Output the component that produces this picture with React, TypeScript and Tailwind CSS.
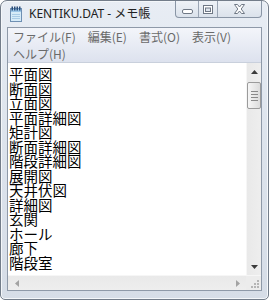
import React from 'react';

const lines = [
  '平面図',
  '断面図',
  '立面図',
  '平面詳細図',
  '矩計図',
  '断面詳細図',
  '階段詳細図',
  '展開図',
  '天井伏図',
  '詳細図',
  '玄関',
  'ホール',
  '廊下',
  '階段室',
];

const menuRow1 = ['ファイル(F)', '編集(E)', '書式(O)', '表示(V)'];

const NotepadIcon = () => (
  <svg width="12" height="16" viewBox="0 0 12 16">
    <rect x="0.5" y="2.5" width="11" height="13" fill="#d6ebf8" stroke="#6f90b3" />
    <rect x="1" y="3" width="10" height="3" fill="#9cc6e8" />
    <line x1="2" y1="8.5" x2="10" y2="8.5" stroke="#a9cbe6" />
    <line x1="2" y1="10.5" x2="10" y2="10.5" stroke="#a9cbe6" />
    <line x1="2" y1="12.5" x2="10" y2="12.5" stroke="#a9cbe6" />
    <rect x="1.5" y="0.5" width="1.5" height="4" fill="#2a4f7c" />
    <rect x="4" y="0.5" width="1.5" height="4" fill="#2a4f7c" />
    <rect x="6.5" y="0.5" width="1.5" height="4" fill="#2a4f7c" />
    <rect x="9" y="0.5" width="1.5" height="4" fill="#2a4f7c" />
  </svg>
);

const CaptionButtons = () => (
  <div className="ml-auto flex h-[17px] w-[87px] self-start overflow-hidden rounded-b-[4px] border border-t-0 border-[#8995a5] bg-gradient-to-b from-[#eef2f7] to-[#dbe2eb]">
    <div className="flex w-[23px] items-center justify-center border-r border-[#9aa5b4] pt-[4px]">
      <svg width="11" height="5" viewBox="0 0 11 5">
        <rect x="0.5" y="0.5" width="10" height="4" rx="1.5" fill="#ffffff" stroke="#6f7885" />
      </svg>
    </div>
    <div className="flex w-[19px] items-center justify-center border-r border-[#9aa5b4]">
      <svg width="10" height="9" viewBox="0 0 10 9">
        <rect x="0.5" y="0.5" width="9" height="8" fill="#ffffff" stroke="#6f7885" />
        <rect x="2.5" y="3" width="5" height="3.5" fill="#dfe5ed" stroke="#6f7885" />
      </svg>
    </div>
    <div className="flex flex-1 items-center justify-center">
      <svg width="11" height="10" viewBox="0 0 11 10">
        <path
          d="M0.5 0.5 H3.5 L5.5 3 L7.5 0.5 H10.5 L7.2 5 L10.5 9.5 H7.5 L5.5 7 L3.5 9.5 H0.5 L3.8 5 Z"
          fill="#ffffff"
          stroke="#6f7885"
          strokeLinejoin="round"
        />
      </svg>
    </div>
  </div>
);

const VScrollbar = () => (
  <div className="flex w-[15px] flex-col border-l border-[#f6f6f6] bg-gradient-to-r from-[#e9e9e9] to-[#eeeeee]">
    <div className="flex h-[17px] items-center justify-center">
      <svg width="7" height="4" viewBox="0 0 7 4">
        <path d="M0 4 L3.5 0 L7 4 Z" fill="#3a3a3a" />
      </svg>
    </div>
    <div className="mt-[2px] flex h-[27px] flex-col items-center justify-center gap-[2px] rounded-[2px] border border-[#9b9b9b] bg-gradient-to-r from-[#f6f6f6] to-[#dcdcdc]">
      <div className="h-px w-[7px] bg-[#8a8a8a]" />
      <div className="h-px w-[7px] bg-[#8a8a8a]" />
      <div className="h-px w-[7px] bg-[#8a8a8a]" />
      <div className="h-px w-[7px] bg-[#8a8a8a]" />
    </div>
    <div className="flex-1" />
    <div className="flex h-[17px] items-center justify-center">
      <svg width="7" height="4" viewBox="0 0 7 4">
        <path d="M0 0 L3.5 4 L7 0 Z" fill="#3a3a3a" />
      </svg>
    </div>
  </div>
);

const HScrollbar = () => (
  <div className="flex h-[15px] border-t border-[#f6f6f6] bg-gradient-to-b from-[#e9e9e9] to-[#eeeeee]">
    <div className="flex w-[17px] items-center justify-center">
      <svg width="4" height="7" viewBox="0 0 4 7">
        <path d="M4 0 L0 3.5 L4 7 Z" fill="#a3a3a3" />
      </svg>
    </div>
    <div className="flex-1" />
    <div className="flex w-[17px] items-center justify-center">
      <svg width="4" height="7" viewBox="0 0 4 7">
        <path d="M0 0 L4 3.5 L0 7 Z" fill="#a3a3a3" />
      </svg>
    </div>
    <div className="flex w-[15px] items-end justify-end bg-[#ececec] pb-[2px] pr-[2px]">
      <svg width="8" height="8" viewBox="0 0 8 8">
        <rect x="6" y="0" width="2" height="2" fill="#b5b5b5" />
        <rect x="3" y="3" width="2" height="2" fill="#b5b5b5" />
        <rect x="6" y="3" width="2" height="2" fill="#b5b5b5" />
        <rect x="0" y="6" width="2" height="2" fill="#b5b5b5" />
        <rect x="3" y="6" width="2" height="2" fill="#b5b5b5" />
        <rect x="6" y="6" width="2" height="2" fill="#b5b5b5" />
      </svg>
    </div>
  </div>
);

const App: React.FC = () => {
  return (
    <div className="h-[300px] w-[269px] bg-white">
      <div className="flex h-full flex-col rounded-t-[7px] rounded-b-[5px] border border-[#737d8a] bg-gradient-to-b from-[#e8edf4] via-[#dce3ec] to-[#d6dde7] px-[6px] pb-[8px] shadow-[inset_0_0_0_1px_#f4f7fa]">
        <div className="flex h-[26px] items-start">
          <div className="ml-[3px] mt-[5px] flex items-center gap-[7px]">
            <NotepadIcon />
            <span
              className="text-[12px] leading-none text-[#222]"
              style={{ fontFamily: '"Noto Sans", "Noto Sans CJK JP", sans-serif' }}
            >
              KENTIKU.DAT - メモ帳
            </span>
          </div>
          <CaptionButtons />
        </div>
        <div className="flex flex-1 flex-col border border-[#8e99a8] bg-white">
          <div
            className="h-[35px] border-b border-[#c9d0dc] bg-gradient-to-b from-[#f3f5fa] to-[#dde2ee] text-[12px] text-[#6a6a6a]"
            style={{ fontFamily: '"Noto Sans CJK JP", "Noto Sans", sans-serif' }}
          >
            <div className="flex h-[17px] items-center pl-[5px] pt-[1px]">
              {menuRow1.map((m) => (
                <span key={m} className="mr-[12px] leading-none">
                  {m}
                </span>
              ))}
            </div>
            <div className="flex h-[17px] items-center pl-[5px]">
              <span className="leading-none">ヘルプ(H)</span>
            </div>
          </div>
          <div className="flex min-h-0 flex-1">
            <div
              className="flex-1 overflow-hidden pl-[1px] pt-[4px] text-[14.5px] leading-[14.5px] text-black"
              style={{ fontFamily: '"Noto Sans CJK JP", sans-serif' }}
            >
              {lines.map((l) => (
                <div key={l}>{l}</div>
              ))}
            </div>
            <VScrollbar />
          </div>
          <HScrollbar />
        </div>
      </div>
    </div>
  );
};

export default App;
